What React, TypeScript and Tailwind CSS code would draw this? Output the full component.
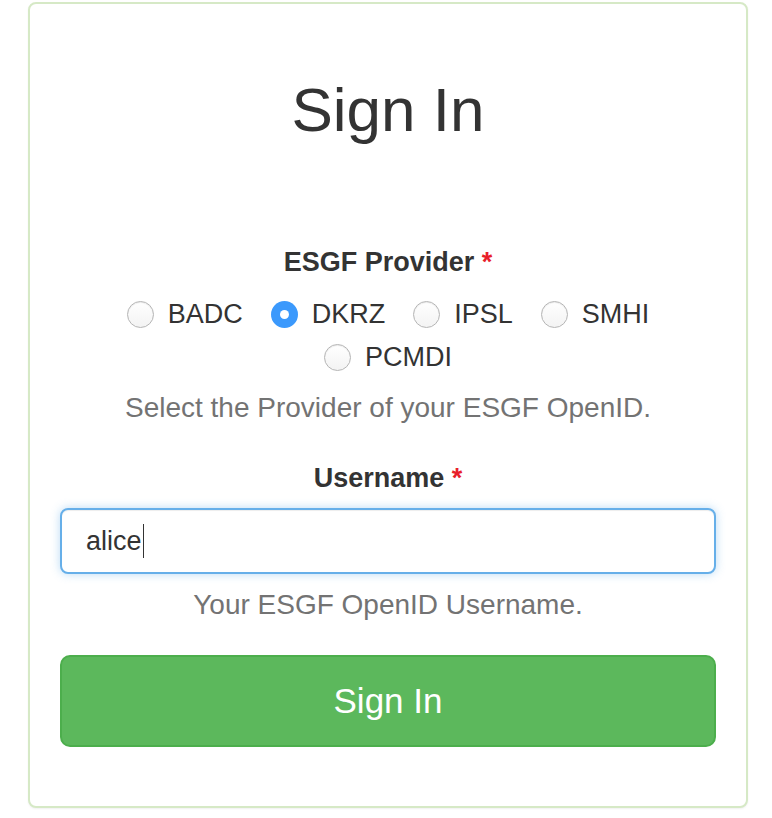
import React from "react";

const providers = ["BADC", "DKRZ", "IPSL", "SMHI", "PCMDI"];

function Radio({ checked }: { checked: boolean }) {
  if (checked) {
    return (
      <span className="flex h-[27px] w-[27px] shrink-0 items-center justify-center rounded-full bg-[#3b99fc]">
        <span className="h-[9px] w-[9px] rounded-full bg-white" />
      </span>
    );
  }
  return (
    <span className="h-[27px] w-[27px] shrink-0 rounded-full border border-[#b5b5b5] bg-gradient-to-b from-white to-[#f3f3f3] shadow-[inset_0_1px_1px_rgba(0,0,0,0.08)]" />
  );
}

export default function App() {
  return (
    <div className="min-h-[818px] w-[772px] bg-white" style={{ fontFamily: '"Liberation Sans", Arial, sans-serif' }}>
      <div className="pt-[2px] pl-[28px]">
        <div className="flex h-[806px] w-[720px] flex-col rounded-[8px] border-2 border-[#d6e9c6] bg-white px-[30px] shadow-[0_1px_2px_rgba(0,0,0,0.06)]">
          <h1 className="mt-[73px] text-center text-[62px] leading-[66px] font-normal text-[#333333]">Sign In</h1>

          <div className="mt-[100px] text-center text-[27px] leading-[38px] font-bold text-[#333333]">
            ESGF Provider <span className="text-[#e8202a]">*</span>
          </div>

          <div className="mt-[12px] flex flex-wrap justify-center gap-x-[28px]">
            {providers.map((p) => (
              <label key={p} className="flex h-[43px] items-center gap-[14px] text-[27px] leading-[43px] text-[#333333]">
                <Radio checked={p === "DKRZ"} />
                <span>{p}</span>
              </label>
            ))}
          </div>

          <div className="mt-[10px] text-center text-[28px] leading-[38px] text-[#737373]">
            Select the Provider of your ESGF OpenID.
          </div>

          <div className="mt-[32px] text-center text-[27px] leading-[38px] font-bold text-[#333333]">
            Username <span className="text-[#e8202a]">*</span>
          </div>

          <div className="mt-[11px] flex h-[66px] items-center rounded-[8px] border-2 border-[#66afe9] bg-white px-[24px] shadow-[0_0_10px_rgba(102,175,233,0.45),inset_0_1px_1px_rgba(0,0,0,0.075)]">
            <span className="text-[27px] leading-[38px] text-[#333333]">alice</span>
            <span className="ml-[1px] h-[34px] w-[1.5px] bg-[#333333]" />
          </div>

          <div className="mt-[12px] text-center text-[28px] leading-[38px] text-[#737373]">
            Your ESGF OpenID Username.
          </div>

          <button className="mt-[31px] flex h-[92px] w-full items-center justify-center rounded-[10px] border-2 border-[#4cae4c] bg-[#5cb85c] text-[35px] leading-[40px] text-white">
            Sign In
          </button>
        </div>
      </div>
    </div>
  );
}
